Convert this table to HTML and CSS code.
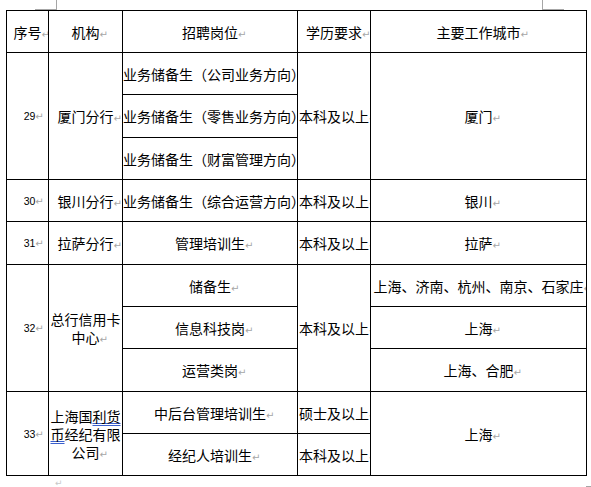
FILE: index.html
```html
<!DOCTYPE html>
<html lang="zh-CN">
<head>
<meta charset="utf-8">
<title>招聘岗位表</title>
<link rel="stylesheet" href="styles.css">
</head>
<body>
<div class="page">
  <div class="marks-top"><span class="mark-tl"></span><span class="mark-tr"></span></div>
  <table class="grid">
    <colgroup><col class="c1"><col class="c2"><col class="c3"><col class="c4"><col class="c5"></colgroup>
    <tr class="r42">
      <td>序号<span class="pm">↵</span></td>
      <td>机构<span class="pm">↵</span></td>
      <td>招聘岗位<span class="pm">↵</span></td>
      <td>学历要求<span class="pm">↵</span></td>
      <td>主要工作城市<span class="pm">↵</span></td>
    </tr>
    <tr class="r42">
      <td rowspan="3" class="num">29<span class="pm">↵</span></td>
      <td rowspan="3">厦门分行<span class="pm">↵</span></td>
      <td class="nw">业务储备生（公司业务方向）<span class="pm">↵</span></td>
      <td rowspan="3">本科及以上<span class="pm">↵</span></td>
      <td rowspan="3">厦门<span class="pm">↵</span></td>
    </tr>
    <tr class="r43"><td class="nw">业务储备生（零售业务方向）<span class="pm">↵</span></td></tr>
    <tr class="r42"><td class="nw">业务储备生（财富管理方向）<span class="pm">↵</span></td></tr>
    <tr class="r42">
      <td class="num">30<span class="pm">↵</span></td>
      <td>银川分行<span class="pm">↵</span></td>
      <td class="nw">业务储备生（综合运营方向）<span class="pm">↵</span></td>
      <td>本科及以上<span class="pm">↵</span></td>
      <td>银川<span class="pm">↵</span></td>
    </tr>
    <tr class="r43">
      <td class="num">31<span class="pm">↵</span></td>
      <td>拉萨分行<span class="pm">↵</span></td>
      <td>管理培训生<span class="pm">↵</span></td>
      <td>本科及以上<span class="pm">↵</span></td>
      <td>拉萨<span class="pm">↵</span></td>
    </tr>
    <tr class="r42">
      <td rowspan="3" class="num">32<span class="pm">↵</span></td>
      <td rowspan="3">总行信用卡中心<span class="pm">↵</span></td>
      <td>储备生<span class="pm">↵</span></td>
      <td rowspan="3">本科及以上<span class="pm">↵</span></td>
      <td class="nw">上海、济南、杭州、南京、石家庄<span class="pm">↵</span></td>
    </tr>
    <tr class="r42">
      <td>信息科技岗<span class="pm">↵</span></td>
      <td>上海<span class="pm">↵</span></td>
    </tr>
    <tr class="r43">
      <td>运营类岗<span class="pm">↵</span></td>
      <td>上海、合肥<span class="pm">↵</span></td>
    </tr>
    <tr class="r42">
      <td rowspan="2" class="num">33<span class="pm">↵</span></td>
      <td rowspan="2">上海国<span class="gram">利货</span><span class="gram">币</span>经纪有限公司<span class="pm">↵</span></td>
      <td>中后台管理培训生<span class="pm">↵</span></td>
      <td>硕士及以上<span class="pm">↵</span></td>
      <td rowspan="2">上海<span class="pm">↵</span></td>
    </tr>
    <tr class="r42">
      <td>经纪人培训生<span class="pm">↵</span></td>
      <td>本科及以上<span class="pm">↵</span></td>
    </tr>
  </table>
  <div class="marks-bottom"><span class="pm-after">↵</span><span class="mark-br"></span></div>
</div>
</body>
</html>
```

FILE: styles.css
```css
html, body {
  margin: 0;
  padding: 0;
  background: #ffffff;
}
body {
  width: 591px;
  height: 487px;
  overflow: hidden;
  font-family: "Noto Sans CJK SC", "Noto Sans", sans-serif;
  font-size: 14px;
  color: #000000;
}
.page {
  padding-left: 6px;
}
.marks-top {
  display: flex;
  height: 10px;
  margin-left: -6px;
}
.mark-tl {
  margin-left: 35px;
  width: 21px;
  height: 9px;
  border-right: 1px solid #a6a6a6;
  border-bottom: 1px solid #a6a6a6;
}
.mark-tr {
  margin-left: 485px;
  width: 21px;
  height: 9px;
  border-left: 1px solid #a6a6a6;
  border-bottom: 1px solid #a6a6a6;
}
.grid {
  border-collapse: collapse;
  table-layout: fixed;
  width: 581px;
}
.c1 { width: 42px; }
.c2 { width: 74px; }
.c3 { width: 175px; }
.c4 { width: 73px; }
.c5 { width: 216px; }
.r42 { height: 42px; }
.r43 { height: 43px; }
.grid td {
  border: 1px solid #000000;
  padding: 0;
  text-align: center;
  vertical-align: middle;
  line-height: 18px;
  overflow: hidden;
}
.grid td.nw {
  white-space: nowrap;
}
.grid td.num {
  padding-left: 4px;
  font-family: "Liberation Sans", Arial, sans-serif;
  font-size: 10.5px;
}
.pm {
  display: inline-block;
  width: 9px;
  margin-right: -9px;
  font-family: "DejaVu Sans", sans-serif;
  font-size: 10px;
  line-height: 10px;
  color: #a6a6a6;
  text-align: left;
}
.gram {
  text-decoration: underline double #3a5fcd;
  text-decoration-thickness: 1px;
  text-underline-offset: 1px;
}
.marks-bottom {
  display: flex;
  height: 12px;
  margin-left: -6px;
}
.pm-after {
  margin-left: 55px;
  margin-top: 3px;
  font-family: "DejaVu Sans", sans-serif;
  font-size: 9px;
  line-height: 9px;
  color: #c8c8c8;
}
.mark-br {
  margin-left: auto;
  margin-top: 10px;
  width: 4px;
  height: 4px;
  border-left: 1px solid #a6a6a6;
  border-top: 1px solid #a6a6a6;
}
```
